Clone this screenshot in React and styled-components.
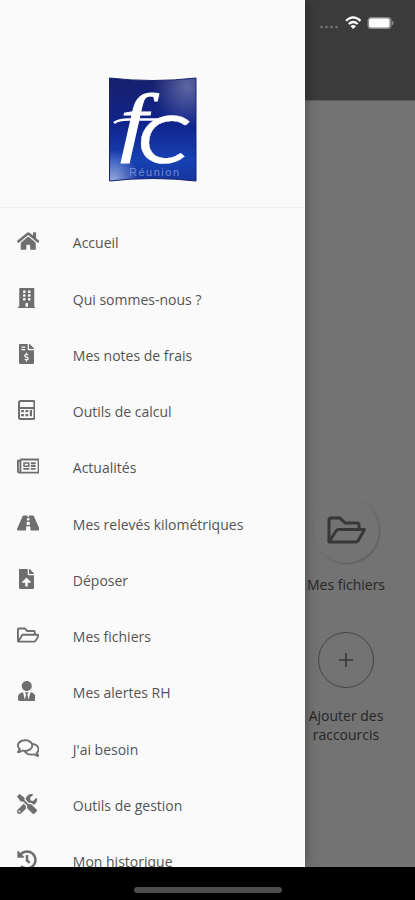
import styled, { createGlobalStyle } from "styled-components";
import {
    FaHome,
    FaBuilding,
    FaFileInvoiceDollar,
    FaRegNewspaper,
    FaRoad,
    FaFileUpload,
    FaRegFolderOpen,
    FaUserTie,
    FaRegComments,
    FaTools,
    FaHistory,
} from "react-icons/fa";

const GlobalStyle = createGlobalStyle`
    * {
        box-sizing: border-box;
    }
    body {
        margin: 0;
        background: #000;
        font-family: "Open Sans", "Noto Sans", sans-serif;
    }
`

const PhoneStyled = styled.div`
    display: flex;
    flex-direction: column;
    width: 415px;
    height: 900px;
    overflow: hidden;
    background: #000;
`

const ScreenStyled = styled.div`
    display: flex;
    height: 867px;
    overflow: hidden;
`

const DrawerStyled = styled.nav`
    position: relative;
    z-index: 1;
    flex: none;
    width: 305px;
    background: #fafafa;
    box-shadow: 0 0 12px rgba(0,0,0,.4);
`

const DrawerHeader = styled.div`
    display: flex;
    justify-content: center;
    height: 208px;
    padding-top: 77px;
    border-bottom: 1px solid #f0f0f0;
`

const MenuList = styled.ul`
    list-style: none;
    margin: 0;
    padding: 6.7px 0 0;
`

const MenuItem = styled.li`
    display: flex;
    align-items: center;
    height: 56.25px;
    padding-left: 16.5px;
    color: #545454;
    font-size: 14px;
    white-space: nowrap;
`

const MenuIcon = styled.span`
    display: flex;
    width: 56.3px;
    padding-left: ${({$inset}) => $inset || 0}px;
    margin-bottom: 3px;
    color: #6e6e6e;
    svg {
        width: ${({$width}) => $width}px;
        height: 20px;
    }
`

const PageStyled = styled.main`
    flex: 1;
    background: #737373;
`

const TopBar = styled.header`
    display: flex;
    align-items: flex-start;
    height: 101px;
    padding: 15px 0 0 14px;
    background: #3b3b3b;
    border-bottom: 1px solid #5c5c5c;
`

const Shortcuts = styled.div`
    display: flex;
    flex-direction: column;
    align-items: center;
    width: 82px;
    padding-top: 396px;
`

const RoundButton = styled.div`
    display: flex;
    align-items: center;
    justify-content: center;
    flex: none;
    width: ${({$size}) => $size}px;
    height: ${({$size}) => $size}px;
    border-radius: 50%;
    border: ${({$outlined}) => $outlined ? "1.5px solid #444" : "none"};
    box-shadow: ${({$outlined}) => $outlined ? "none" : "1px 1px 2px rgba(0,0,0,.2)"};
    color: #373737;
`

const ShortcutLabel = styled.div`
    margin: ${({$gap}) => $gap};
    color: #262626;
    font-size: 14px;
    line-height: 19px;
    text-align: center;
    white-space: nowrap;
`

const BottomBar = styled.footer`
    display: flex;
    justify-content: center;
    height: 33px;
    padding-top: 20px;
    background: #000;
`

const HomeIndicator = styled.div`
    width: 148px;
    height: 6px;
    border-radius: 3px;
    background: #4d4d4d;
`

const Logo = () => (
    <svg width="88" height="105" viewBox="0 0 88 105">
        <defs>
            <linearGradient id="sky" x1="0" y1="0" x2="0" y2="1">
                <stop offset="0" stopColor="#17206c" />
                <stop offset=".45" stopColor="#10248c" />
                <stop offset=".8" stopColor="#1741b4" />
                <stop offset="1" stopColor="#16359c" />
            </linearGradient>
            <radialGradient id="shine" cx=".9" cy=".08" r=".4">
                <stop offset="0" stopColor="#8d96c4" stopOpacity=".6" />
                <stop offset="1" stopColor="#8d96c4" stopOpacity="0" />
            </radialGradient>
            <radialGradient id="glow" cx=".04" cy="1" r=".3">
                <stop offset="0" stopColor="#b4c8f0" stopOpacity=".8" />
                <stop offset="1" stopColor="#b4c8f0" stopOpacity="0" />
            </radialGradient>
        </defs>
        <path d="M.5 1 Q44 6 87 1 V104 Q44 99 .5 104 Z" fill="url(#sky)" />
        <path d="M.5 1 Q44 6 87 1 V104 Q44 99 .5 104 Z" fill="url(#shine)" />
        <path d="M.5 1 Q44 6 87 1 V104 Q44 99 .5 104 Z" fill="url(#glow)" stroke="#17236f" strokeWidth="1" />
        <g fill="#fff" stroke="#fff" fontStyle="italic">
            <text transform="translate(11 70) scale(1.3 1)" fontSize="76" strokeWidth=".8" fontFamily="Liberation Serif, serif">f</text>
            <text transform="translate(28 85.5) scale(1.27 1)" fontSize="65" strokeWidth=".3" fontFamily="Lato, sans-serif">C</text>
        </g>
        <path d="M5 46 Q9 42.5 20 42.5 H56" fill="none" stroke="#fff" strokeWidth="2.6" />
        <text x="20" y="99" fontSize="11" textLength="50" fill="#6f8bd0" fontFamily="Liberation Sans, sans-serif">Réunion</text>
    </svg>
)

const Calculator = () => (
    <svg viewBox="0 0 448 512" fill="none" stroke="currentColor" strokeWidth="52">
        <rect x="26" y="26" width="396" height="460" rx="36" />
        <path d="M26 205H422" />
        <path d="M80 285H265M80 385H265" strokeWidth="56" strokeDasharray="72 38" />
        <path d="M330 255V415" strokeWidth="56" />
    </svg>
)

const StatusIcons = () => (
    <svg width="76" height="16" viewBox="0 0 76 16">
        <g fill="#777">
            <circle cx="2.5" cy="12" r="1.3" />
            <circle cx="7.5" cy="12" r="1.3" />
            <circle cx="12.5" cy="12" r="1.3" />
            <circle cx="17.5" cy="12" r="1.3" />
        </g>
        <g fill="none" stroke="#fff" strokeWidth="2.3">
            <path d="M27 5.8Q34 -1 41.5 5.8" />
            <path d="M29.8 9Q34.2 5 38.7 9" />
        </g>
        <path d="M31.5 11.2Q34.2 9 37 11.2L34.2 14Z" fill="#fff" />
        <rect x="48.5" y="2" width="24" height="12" rx="3.5" fill="#858585" />
        <rect x="50" y="3.5" width="20.5" height="9" rx="2" fill="#fff" />
        <path d="M73 5.5Q76.5 8 73 10.5Z" fill="#858585" />
    </svg>
)

const menu = [
    {label: "Accueil", icon: <FaHome />, width: 22.5},
    {label: "Qui sommes-nous ?", icon: <FaBuilding />, width: 17.5, inset: 1},
    {label: "Mes notes de frais", icon: <FaFileInvoiceDollar />, width: 15, inset: 2.5},
    {label: "Outils de calcul", icon: <Calculator />, width: 17.5, inset: 1},
    {label: "Actualités", icon: <FaRegNewspaper />, width: 22.5},
    {label: "Mes relevés kilométriques", icon: <FaRoad />, width: 22.5},
    {label: "Déposer", icon: <FaFileUpload />, width: 15, inset: 2.5},
    {label: "Mes fichiers", icon: <FaRegFolderOpen />, width: 22.5},
    {label: "Mes alertes RH", icon: <FaUserTie />, width: 17.5, inset: 1},
    {label: "J'ai besoin", icon: <FaRegComments />, width: 22.5},
    {label: "Outils de gestion", icon: <FaTools />, width: 20},
    {label: "Mon historique", icon: <FaHistory />, width: 20},
]

const App = () => {
    return <PhoneStyled>
        <GlobalStyle />
        <ScreenStyled>
            <DrawerStyled>
                <DrawerHeader>
                    <Logo />
                </DrawerHeader>
                <MenuList>
                    {menu.map((item) => (
                        <MenuItem key={item.label}>
                            <MenuIcon $width={item.width} $inset={item.inset}>{item.icon}</MenuIcon>
                            {item.label}
                        </MenuItem>
                    ))}
                </MenuList>
            </DrawerStyled>
            <PageStyled>
                <TopBar>
                    <StatusIcons />
                </TopBar>
                <Shortcuts>
                    <RoundButton $size={66}>
                        <svg width="40" height="28" viewBox="0 0 40 28" fill="none" stroke="currentColor" strokeWidth="3" strokeLinejoin="round">
                            <path d="M3 26V4Q3 2 5 2H14L19 7H31Q33 7 33 9V13" />
                            <path d="M3 26L10 15Q11 13.5 13 13.5H38.5L32 25Q31 26 30 26Z" />
                        </svg>
                    </RoundButton>
                    <ShortcutLabel $gap="12px 0 38px">Mes fichiers</ShortcutLabel>
                    <RoundButton $size={56} $outlined>
                        <svg width="16" height="16" viewBox="0 0 16 16" stroke="currentColor" strokeWidth="1.6">
                            <path d="M8 1V15M1 8H15" />
                        </svg>
                    </RoundButton>
                    <ShortcutLabel $gap="18px 0 0">Ajouter des<br />raccourcis</ShortcutLabel>
                </Shortcuts>
            </PageStyled>
        </ScreenStyled>
        <BottomBar>
            <HomeIndicator />
        </BottomBar>
    </PhoneStyled>
}

export default App;
